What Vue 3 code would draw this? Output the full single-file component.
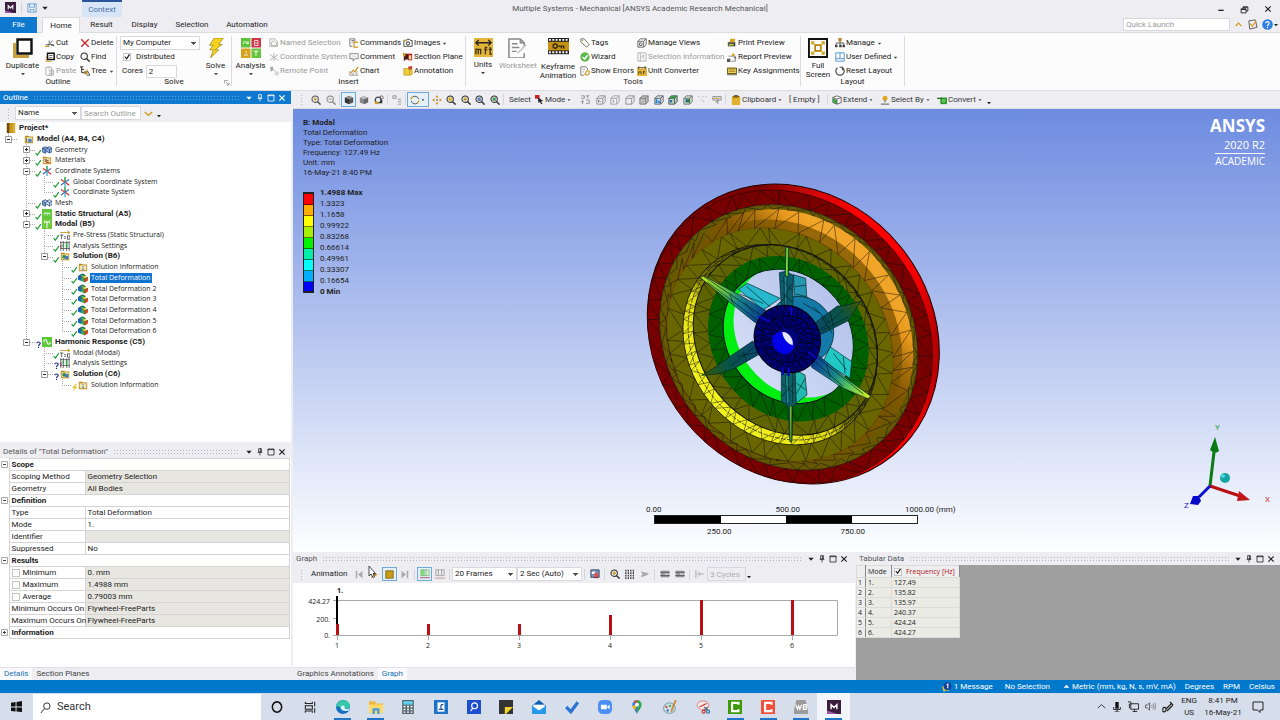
<script setup>
import { h } from 'vue'

const P = (d, c = '#444', w = 1) => `<path d="${d}" fill="none" stroke="${c}" stroke-width="${w}"/>`
const F = (d, c = '#444') => `<path d="${d}" fill="${c}"/>`
const cube = (a, b, c) => F('M1 3L6 1L11 3L6 5Z', a) + F('M1 3L6 5V11L1 9Z', b) + F('M11 3L6 5V11L11 9Z', c)
const cubeLine = (c, f = 'none', g = '') =>
  `<path d="M1 4L4 1H11V8L8 11H1Z" fill="${f}" stroke="${c}"/>` + P('M1 4H8V11M8 4L11 1', c) + g
const lens = (c, inner) =>
  `<circle cx="5" cy="5" r="3.8" fill="none" stroke="${c}" stroke-width="1.3"/>` + P('M8 8L11.5 11.5', c, 1.8) + inner
const folder = (g) => F('M1 2H5L6 3H11V11H1Z', '#b88a1e') + F('M2 4H10V10H2Z', '#f4e6b0') + g

const icons = {
  app: F('M0 0H12V12H0Z', '#3b1d40') + F('M0 9L9 12H0Z', '#9b5aa5') + P('M3.500 8V4L6 6.500L8.500 4V8', '#fff', 1.2),
  save: P('M1 1H11V11H1ZM3 1V5H9V1M3.500 11V8H8.500V11', '#5b9bd5'),
  caret: F('M3 4.500H9L6 8Z', '#444'),
  caretW: F('M2 4H10L6 8.500Z', '#fff'),
  caretB: F('M2 4H10L6 8.500Z', '#222'),
  pinW: P('M4 1H8V6H4ZM2.500 6.500H9.500M6 7V11', '#fff', 1.2), pinB: P('M4 1H8V6H4ZM2.500 6.500H9.500M6 7V11M7 1V6', '#222', 1.2),
  maxW: P('M1.500 1.500H10.500V10.500H1.500ZM1 2.500H11', '#fff', 1.2), maxB: P('M1.500 1.500H10.500V10.500H1.500ZM1 2.500H11', '#222', 1.2),
  xW: P('M2 2L10 10M10 2L2 10', '#fff', 1.8), xB: P('M2 2L10 10M10 2L2 10', '#222', 1.8),
  min: P('M2 8H10', '#222', 2), restore: P('M1.500 5H8V10.500H1.500ZM4 5V2.500H10.500V8H8M1.500 6H8M4 3H10', '#222', 1.2),
  up: P('M2 8L6 4L10 8', '#d49b1e', 1.6), down: P('M1 4L6 8.500L11 4', '#d49b1e', 1.8),
  note: P('M2 2L9 1L11 9L3 11Z', '#555') + P('M3.500 5L6 8L10 2', '#d49b1e', 1.3),
  help: '<circle cx="6" cy="6" r="5.800" fill="#2f7fe0"/>' + P('M4.200 4.600C4.200 2.400 7.800 2.400 7.800 4.600C7.800 6 6 6 6 7.500M6 8.500V10', '#fff', 1.3),
  duplicate: F('M0 5H3V17H16V20H0Z', '#c9a13c') + `<path d="M4.500 1.500H18.500V15.500H4.500Z" fill="#fff" stroke="#111" stroke-width="2.400"/>`,
  cut: P('M1 8H9M3 10L9 3M5 3V7', '#555') + P('M0 10H5', '#c9951e', 1.4) + P('M7 8L11 9', '#555', 1.6),
  del: P('M1.500 1.500L10.500 10.500M10.500 1.500L1.500 10.500', '#c8252c', 1.6),
  copy: P('M3 1.500H11V9H3Z', '#111', 1.8) + F('M5 3.500H9V4.500H5ZM5 6H8V7H5Z', '#333') + F('M1 5H2V11H8V12H1Z', '#c9951e'),
  find: lens('#333', ''), paste: P('M1 2H8V11H1ZM4 5H10V11H4M3 1H6M5 7H9M5 9H9', '#aaa'),
  tree: P('M2 1V8H6M2 4H5M0 1H4', '#333', 1.2) + F('M5 6H8V4H9V10H5Z', '#b8862a') + P('M9 6L12 11M8 11H12', '#333'),
  bolt: F('M9 0H19L14 7H18L10 13H14L5 22L8 13H4L8 8H4Z', '#f6d21c') + P('M9 0H19L14 7H18L10 13H14L5 22L8 13H4L8 8H4Z', '#98811d', .8),
  launch: P('M1 7V1H8M4 4L10 10M10 5V10H5', '#555'),
  analysis: F('M0 0H9.500V9.500H0Z', '#5fc23a') + F('M10.500 0H20V9.500H10.500Z', '#d0354a') + F('M0 10.500H9.500V20H0Z', '#d7a11d') + F('M10.500 10.500H20V20H10.500Z', '#66c53b') + P('M2 4H8M2 5.500H3M5 5.500H8M3 17H7M5 13V15M15 12V18M12.500 13L15 14L17.500 13', '#e9f7df') + P('M13.500 2.500H17V7.500H13.500ZM13.500 5H17', '#f6c9cf'),
  named: P('M1 1H7L10 4V10H1ZM3 5L6 3L9 6V9H3Z', '#aaa'), coordg: P('M6 1V11M1 3L11 10M11 3L1 10', '#aaa'), remote: F('M1 1H5V5L2 7Z', '#aaa') + P('M5 4L8 7', '#aaa') + '<circle cx="9.500" cy="9" r="1.800" fill="none" stroke="#aaa"/>',
  cmd: P('M1 1H7V5M1 1V10H4M3 3H6M3 5H5', '#666') + P('M11 5H6V11H11', '#c9951e', 1.4), comment: P('M1 2H11V8H7L5 11V8H1Z', '#777') + P('M3 5H9', '#bbb', .8),
  chart: P('M1 11H11M1 11V6', '#888') + P('M2 9L5 5L7 7L11 1', '#c9951e', 1.4) + F('M4 8H6V11H4ZM8 6H10V11H8Z', '#bbb'),
  images: P('M1 3H4L5 1.500H8L9 3H11V10H1Z', '#555', 1.2) + '<circle cx="6" cy="6.500" r="2" fill="none" stroke="#333" stroke-width="1.200"/>' + F('M1 2H4V4H1Z', '#c9951e'),
  section: F('M1 2H6V9H3L1 11Z', '#4a1c14') + F('M6 2H11V10H6Z', '#b01c1c') + F('M7 4H10V9H7Z', '#f2dc9a') + F('M0 1H3V5H0Z', '#d7a11d'),
  annot: F('M1 3H8L11 5V10L8 11H1Z', '#eecf3b') + F('M6 1L11 0V4L7 5Z', '#c33') + P('M1 3H8V11H1ZM8 3L11 5V10L8 11', '#b49620', .8),
  units: F('M0 0H20V20H0Z', '#e3b53b') + P('M2 5H18M5 2L2 5L5 8M15 2L18 5L15 8', '#222', 1.4) + P('M2 17V11M2 12H4.500V17M4.500 12H7V17M12 17V10H14M11 12.500H14M17 9.500V17H19M15.500 12H19', '#3f3110', 1.4),
  worksheet: P('M13 1H1V21H17V16M13 1L17 5V9M13 1V5H17', '#888', 1.600) + P('M4 6H10M4 10H12M4 14H9', '#888', 1.4) + P('M10 16L19 7', '#c5c5c5', 1.6),
  keyframe: F('M0 0H22V17H0Z', '#222') + `<path d="M1 2H21M1 15H21" stroke="#fff" stroke-width="2" stroke-dasharray="2 1.500"/>` + F('M0 4H22V13H0Z', '#c69214') + '<circle cx="7.500" cy="8.500" r="2.200" fill="none" stroke="#3b2b00" stroke-width="1.500"/>' + P('M10 8.500H17M14 8.500V11M16.500 8.500V11', '#3b2b00', 1.500),
  tag: P('M1 1H5L11 8L8 11L1 5Z', '#777', 1.2) + F('M2 2H4V4H2Z', '#d0b060'), wizard: '<circle cx="6" cy="6" r="5.600" fill="#58b947"/>' + P('M3 6L5.500 8.500L9.500 3.500', '#fff', 1.8),
  errors: P('M1 1H7L9 3V5M1 1V11H5', '#666') + P('M3 4H6M3 7H5', '#999') + P('M6 10L8 6H11V9L9 11Z', '#c9951e', 1.3),
  views: P('M1 4L4 1H11V8L8 11H1ZM1 4H8V11M8 4L11 1M3 6H6V9H3Z', '#555'), selinfo: P('M1 1H11V11H1ZM4 1V11M6 4H9M6 6H9', '#aaa') + P('M5 5L9 10', '#bbb'),
  conv: F('M0 3H12V12H0Z', '#e3b53b') + P('M1 2H11M3 0L1 2L3 4M9 0L11 2L9 4M2 10V7H5V10M8 10V6M7 7H10', '#4f3f10'),
  print: F('M1 5H10V10H1Z', '#444') + F('M4 1H10L9 5H3Z', '#d7a11d') + F('M2 7H8V9H2Z', '#b5c53b'), report: P('M2 5H10V11H5', '#777') + F('M0 8H4V12H0Z', '#555') + F('M6 2H9V5H6Z', '#d7a11d') + P('M8 7H11', '#555'),
  keys: F('M0 2H12V9H0Z', '#f4d35e') + P('M.5 2.500H11.500V9H.5ZM0 10.500H12', '#4f3f10') + P('M2 4.500H10M2 6.500H10', '#8a6a10', .8),
  full: `<path d="M1 1H20V20H1Z" fill="#fff" stroke="#111" stroke-width="2"/>` + P('M7.500 7.500H13.500V13.500H7.500Z', '#b8860b', 1.8) + P('M4 4L7.500 7.500M17 4L13.500 7.500M4 17L7.500 13.500M17 17L13.500 13.500M4 7V4H7M14 4H17V7M4 14V17H7M14 17H17V14', '#d7a11d', 1.4),
  manage: F('M4 0H8V4H4Z', '#b8862a') + F('M0 8H3V11H0ZM5 8H8V11H5ZM9 8H12V11H9Z', '#444') + P('M6 4V8M1.500 8V6H10.500V8', '#444'),
  userdef: P('M1 1H11V11H1ZM1 8H11M6 1V8', '#5b9bd5', 1.2), reset: P('M3 2A5 5 0 1 0 9 2M9 5V1.500H5.500', '#444', 1.4),
  zin: lens('#555', P('M3 5H7M5 3V7', '#c9951e', 1.3)), zout: lens('#888', P('M3 5H7', '#888')),
  shaded: cube('#888', '#333', '#555'), solid: cube('#bbb', '#888', '#666'), wheelview: '<circle cx="5" cy="6" r="3.500" fill="none" stroke="#444" stroke-width="1.600"/><circle cx="9" cy="3" r="2" fill="none" stroke="#555"/>' + F('M1 8H5V11H1Z', '#d7a11d') + F('M8 6H10V10H7Z', '#333'),
  listg: P('M1 1H5V4H1ZM7 5H11M7 8H11M7 11H11', '#888'), rotate: P('M3 2.500A4.800 4.800 0 0 1 10.500 5M9 9.800A4.800 4.800 0 0 1 1.500 7', '#555', 1.2) + P('M1 5L3 2.500M11 7L9 9.800', '#d7a11d', 1.8),
  pan: F('M6 0L8 3H4ZM6 12L8 9H4ZM0 6L3 4V8ZM12 6L9 4V8Z', '#c9951e') + F('M5 5H7V7H5Z', '#666'), z1: lens('#333', F('M3 3H7V7H3Z', '#e0b12c')), z2: lens('#333', P('M3 5H7M5 3V7', '#c9951e', 1.8)), z3: lens('#333', F('M3 3H7V7H3Z', '#5b80b5')), z4: lens('#333', F('M3 3H7V7H3Z', '#4b9b58')),
  mode: F('M0 0H6V5H0Z', '#d02020') + F('M4 3L11 8L8 8.500L10 12L8 12L6.500 9L4.500 10.500Z', '#222'),
  pts: P('M0 1H4V4H0M6 1H10M8 1V4M2 6V11M6 6H10V10H6M0 8H3', '#888'), c1: cubeLine('#888', 'none', P('M3 6L6 9M3 9V6', '#777')), c2: cubeLine('#999', 'none', P('M4 6V9', '#777')), c3: cubeLine('#888'), c4: cubeLine('#777', '#bbb'),
  c5: cubeLine('#555', '#d4e3f1', F('M2 5H4V10H2ZM5 7H7V10H5Z', '#1977c9')), c6: cubeLine('#444', '#b9d7c0', F('M4 1H11L8 4H1Z', '#3c9a4f') + F('M2 6H5V9H2Z', '#246fb5')), c7: cubeLine('#666', '#cde3d2', F('M3 5H8V9H3Z', '#207a3c') + F('M4 6H6V8H4Z', '#2e68c0')),
  dots: P('M1 2H3M6 2H8M10 2H12M4 6H6M8 6V9', '#bbb'), flag: P('M1 2H11V6H1ZM7 6V11M4 9L8 6', '#777') + P('M2 4H9', '#c9951e'),
  clip: F('M1 2H11V12H1Z', '#e0b12c') + F('M4 0H8V3H4Z', '#555') + F('M2 1H10V3H2Z', '#8a6510'), extend: '<path d="M6 1L11 3V9L6 11L1 9V3Z" fill="#fff" stroke="#555"/>' + F('M1 4L6 6V11L1 9Z', '#3aa845') + P('M1 3L6 5L11 3M6 5V11', '#555'), selby: '<circle cx="6" cy="4" r="3" fill="#e0a820"/>' + P('M6 6V9M1 11H11', '#777', 1.4), convert: F('M4 3H12V11H4Z', '#2d9b32') + F('M6 5H10V9H6Z', '#65c552') + P('M0 4H6', '#205f22', 1.4),
  project: F('M1 0H11V12H1Z', '#c99a18') + F('M1 0H4V12H1Z', '#6d4a10') + F('M9 1H10V11H9Z', '#f0d070'), model: folder('<circle cx="7" cy="8" r="2.500" fill="#5d88b5"/>' + P('M3 5V10', '#555')), geom: F('M0 4L4 2L7 4V8L4 10L0 8Z', '#7d9fd4') + F('M5 4L9 2L12 4V8L9 10L5 8Z', '#9db7e0') + P('M0 4L4 2L7 4L4 5.500ZM4 5.500V10L0 8V4M5 7L9 9.500L12 8V4L9 2L6 3.500M9 9.500V5.500L12 4M9 5.500L6 4', '#26467e', .9), mesh: F('M0 4L4 2L7 4V8L4 10L0 8Z', '#a9c0e4') + F('M5 4L9 2L12 4V8L9 10L5 8Z', '#d3e0f3') + P('M0 4L4 2L7 4L4 5.500ZM4 5.500V10L0 8V4M5 7L9 9.500L12 8V4L9 2L6 3.500M9 9.500V5.500L12 4M9 5.500L6 4M0 6L4 8', '#2b4878', .9),
  mat: folder(P('M4 8L8 6M5 9L9 9', '#b23b1e', 1.4) + F('M3 5H6V7H3Z', '#777')), coord: P('M6 5V0', '#22a94a', 1.8) + P('M6 6L1 3M6 6L11 10', '#d33', 1.6) + P('M6 6L1 10M6 6L11 3', '#456dbc', 1.5) + P('M6 6V12', '#29a5b8', 1.4),
  ss: F('M0 0H12V12H0Z', '#62c63a') + P('M2 5H10M3 7H4M6 7H7M9 7H10', '#fff', 1.2), modal: F('M0 0H12V12H0Z', '#70cb3c') + P('M6 2V11M3 3L6 4.500L9 3M3 2V5M9 2V5', '#fff', 1.1), harm: F('M0 0H12V12H0Z', '#5bc83a') + P('M2 6C3 2 5 2 6 6S9 10 10 6', '#fff', 1.3),
  pre: P('M0 3H12M9 1L12 3L9 5', '#c99a30', 1.1) + P('M0 6H4M2 6V11M5 8H7M5 10H7M9 7H12V11H9Z', '#444'), aset: P('M1 0V12M4 0V12M8 0V12M11 0V12M0 2H12M0 9H12', '#555') + P('M4 4V7M8 3V8', '#2da84a', 2) + P('M1 5V8', '#a04080', 1.8), sol: folder(F('M3 5H7V9H3Z', '#2c8c4a') + F('M6 6H10V10H6Z', '#477db8')), info: folder(P('M6 5V6M6 7V10', '#3668b0', 1.2)),
  defo: F('M0 4L5 1L9 3L5 10L0 8Z', '#1e62c0') + F('M3 3L7 1L9 3L5 5Z', '#3eb04a') + F('M4 5L8 3.500L12 5L8 7Z', '#e8d020') + F('M4 5L8 7V11.500L4 9.500Z', '#3eb04a') + F('M8 7L12 5V9L8 11.500Z', '#e04820') + P('M4 5L8 7L12 5M8 7V11M0 4L5 1L9 3', '#234', .7),
  check: P('M1 7L4 10.500L10 2', '#1f9a35', 2), quest: P('M3 4C3 1 9 1 9 4C9 6 6 6 6 8.500M6 10V12', '#1d2f83', 2), flash: F('M8 0L2 7H6L3 12L11 5H7L10 0Z', '#f0c020'),
  prev: F('M1 1H3V11H1ZM10 1V11L4 6Z', '#aaa'), play: F('M2 2L10 6L2 11Z', '#b8862a'), stop: F('M1 1H11V11H1Z', '#c99a18') + P('M1 1H11V11H1Z', '#7b5f12', 1), next: F('M9 1H11V11H9ZM2 1V11L8 6Z', '#aaa'),
  gcols: F('M1 1H5V8H1Z', '#8be27e') + F('M7 1H11V8H7Z', '#d4efcf') + P('M1 1H11V8H1ZM5 1V8M7 1V8', '#5aa65a', .7) + P('M0 10.500H12', '#a44'), gcols2: P('M1 1H11V8H1ZM4 1V8M8 1V8', '#999') + P('M0 11H12', '#b88'),
  export: F('M1 1H11V10H1Z', '#7292b8') + F('M2 3H6V6H2Z', '#fff') + F('M5 5H10V11H5Z', '#d55') + P('M1 1H11V10H1Z', '#345'), gridg: `<path d="M1 1V12M4 1V12M7 1V12M10 1V12" stroke="#333" stroke-width="1.500" stroke-dasharray="2 1"/>`, disc: F('M1 3L11 5L7 8L1 10L3 6Z', '#aaa'), film: F('M1 2H11V10H1Z', '#999') + P('M0 4H12M0 8H12', '#555') + P('M6 6H10', '#fff'), cyc: P('M1 1V11M1 6H11M4 3L7 6L4 9', '#aaa'),
  msg: F('M0 5H8V11L5 10L2 12Z', '#e8c93c') + '<circle cx="6.500" cy="5" r="4.600" fill="#173f9c"/>' + P('M5.500 3.500L7 2.500V7.500', '#fff', 1.3), tri: F('M1 8L6 3L11 8Z', '#fff'),
  win: F('M0 2L5 1V6H0ZM6 1L12 0V6H6ZM0 7H5V11.500L0 11ZM6 7H12V12L6 11.500Z', '#111'), search: '<circle cx="7.500" cy="4.500" r="3.500" fill="none" stroke="#222"/>' + P('M5 7L1 12', '#222'),
  cortana: '<ellipse cx="6" cy="6" rx="4" ry="4.400" fill="none" stroke="#111" stroke-width="1.300"/>', tasks: P('M2 1.500V3H8V1.500M2 5H8V8H2ZM2 11V9.500H8V11M10 1.500V5.500M10 7V11', '#222', .9),
  edge: '<circle cx="6" cy="6" r="6" fill="#1670c0"/>' + F('M0 6C0 -1 11 -2 12 5C12 8 8 8 7.500 7C8 5 4 4 4 7C2 5 1 5 0 6Z', '#36c8a8') + F('M4 7C4 4 8 4 7.500 7C8 8 11 8.500 12 6L11 9C7 10 5 9 4 7Z', '#dff2fa'),
  explorer: F('M0 1H5L6 3H12V11H0Z', '#f0b93a') + F('M0 4H12V11H0Z', '#ffd96a') + F('M3 7H9V12H3Z', '#4a9bdc') + F('M5 9H7V12H5Z', '#ffd96a'), calc: F('M1 0H11V12H1Z', '#56646f') + F('M2 1H10V4H2Z', '#5fd1ea') + `<path d="M3 5V11M6 5V11M9 5V11" stroke="#fff" stroke-width="1.600" stroke-dasharray="1.400 1"/>`,
  book: F('M0 0H12V12H0Z', '#1e73c8') + F('M3 2H9V10H3Z', '#fff') + P('M6 4V8M6 4H8M4 8H8', '#1e4f9a'), magapp: F('M0 0H12V12H0Z', '#1b4fd0') + '<circle cx="6.500" cy="5" r="2.500" fill="none" stroke="#fff"/>' + P('M5 7L3 9.500', '#fff'), sticky: F('M0 0H12V12H0Z', '#333') + F('M5 6H12L6 12H5Z', '#f2d22c'),
  mail: F('M0 5L6 0L12 5V12H0Z', '#0a5fb0') + F('M1 4H11V9H1Z', '#fff') + F('M0 5L6 9L12 5V12H0Z', '#2699e8'), todo: P('M1 6L5 10L11 2', '#2e74d4', 2.800), zoom: '<rect width="12" height="12" rx="4" fill="#4b8ff5"/>' + F('M2.500 4H7.500V8H2.500ZM8 5.500L10 4V8L8 6.500Z', '#fff'),
  maps: F('M6 12C5 9 2 7 2 4C2 2 4 0 6 0Z', '#3b78e7') + F('M6 12C7 9 10 7 10 4C10 1.500 8 0 6 0Z', '#34a853') + F('M2 5L6 4L4 9Z', '#fbbc04') + F('M3 1L6 0V4Z', '#ea4335') + '<circle cx="6" cy="4" r="1.600" fill="#fff"/>',
  paint: '<ellipse cx="5.500" cy="7" rx="5" ry="4.500" fill="#cfe0ea" stroke="#8aa"/><circle cx="3" cy="6" r="1" fill="#d44"/><circle cx="6" cy="5" r="1" fill="#4a4"/><circle cx="4" cy="9" r="1" fill="#36c"/>' + P('M7 10L11 0', '#c98b3c', 1.6), snip: '<ellipse cx="6" cy="4.500" rx="5" ry="3.800" fill="#f4e8ea" stroke="#d99"/>' + P('M3 6L9 3', '#c33') + P('M7 6L10 9M10 6L7 9', '#567', 1) + '<circle cx="6.500" cy="10" r="1.300" fill="none" stroke="#c33"/><circle cx="10.300" cy="10" r="1.300" fill="none" stroke="#37a"/>',
  camg: F('M0 0H12V12H0Z', '#3f9b0b') + P('M9 4V2.500H3.500V9.500H9V8', '#fff', 1.8), camr: F('M0 0H12V12H0Z', '#f0503c') + P('M9 4V2.500H3.500V9.500H9V8', '#fff', 1.8), wb: F('M2 0H10L12 9V12H0V9Z', '#9a9a9a') + P('M1.500 4L3 8L4 5L5 8L6.500 4M8 4V8H10.500V4H8M8 6H10.500', '#fff'),
  chev: P('M1 8L6 3.500L11 8', '#222', 1.1), mic: F('M4 0H8V8H4Z', '#111') + P('M2 6V9H10V6M6 9V12M3 12H9', '#111'), net: P('M3 3H11.500V9H3ZM7 9V11M5 11.500H10M0 1H3V4M1.500 3V8', '#222'), spk: P('M.5 4.500H2.500L5 2V10L2.500 7.500H.5Z', '#444', .9) + P('M7 4.500C8 5.500 8 6.500 7 7.500M8.500 3C10 5 10 7 8.500 9M10.300 2C12 5 12 7 10.300 10', '#777', .9), pen: P('M1 9C0 5 5 6 4 9C3 12 0 11 1 9M4 8L10 2M5 10L11 4M8 1L11 4', '#222', 1.2), action: P('M1 1H11V9H8V11.500L5.500 9H1Z', '#222')
}
const Ico = (p) => h('svg', { class: 'ico', width: p.s || 10, height: p.s || 10, viewBox: `0 0 ${p.v || 12} ${p.v || 12}`, innerHTML: icons[p.n], 'aria-hidden': 'true' })
Ico.props = ['n', 's', 'v']

const outlineCols = [
  { w: 35, items: [['cut', 'Cut'], ['copy', 'Copy'], ['paste', 'Paste', 0, 1]] },
  { w: 36, items: [['del', 'Delete'], ['find', 'Find'], ['tree', 'Tree', 1]] }
]
const insertCols = [
  { w: 80, items: [['named', 'Named Selection', 0, 1], ['coordg', 'Coordinate System', 0, 1], ['remote', 'Remote Point', 0, 1]] },
  { w: 54, items: [['cmd', 'Commands'], ['comment', 'Comment'], ['chart', 'Chart']] },
  { w: 62, items: [['images', 'Images', 1], ['section', 'Section Plane'], ['annot', 'Annotation']] }
]
const toolCols = [
  { w: 57, items: [['tag', 'Tags'], ['wizard', 'Wizard'], ['errors', 'Show Errors']] },
  { w: 90, items: [['views', 'Manage Views'], ['selinfo', 'Selection Information', 0, 1], ['conv', 'Unit Converter']] },
  { w: 73, items: [['print', 'Print Preview'], ['report', 'Report Preview'], ['keys', 'Key Assignments']] }
]
const layoutCols = [{ w: 69, items: [['manage', 'Manage', 1], ['userdef', 'User Defined', 1], ['reset', 'Reset Layout']] }]

const tools = [
  { n: 'zin', w: 15 }, { n: 'zout', w: 15 }, { sep: 1 }, { n: 'shaded', w: 15, on: 1 }, { n: 'solid', w: 15 }, { n: 'wheelview', w: 15 }, { sep: 1 },
  { n: 'listg', w: 15 }, { sep: 1 }, { n: 'rotate', w: 22, on: 1, more: 1 }, { n: 'pan', w: 15 }, { n: 'z1', w: 14 }, { n: 'z2', w: 15 }, { n: 'z3', w: 14 }, { n: 'z4', w: 15 }, { sep: 1 }
]
const filters = ['pts', 'c1', 'c2', 'c3', 'c4', 'c5', 'c6', 'c7', 'dots', 'flag']

const T = (l, icon, name, mark, exp, bold, sel) => ({ l, icon, name, mark, exp, bold, sel })
const tree = [
  T(0, 'project', 'Project*', '', '', 1), T(1, 'model', 'Model (A4, B4, C4)', '', '-', 1),
  T(2, 'geom', 'Geometry', 'check', '+'), T(2, 'mat', 'Materials', 'check', '+'), T(2, 'coord', 'Coordinate Systems', 'check', '-'),
  T(3, 'coord', 'Global Coordinate System', 'check'), T(3, 'coord', 'Coordinate System', 'check'), T(2, 'mesh', 'Mesh', 'check'),
  T(2, 'ss', 'Static Structural (A5)', 'check', '+', 1), T(2, 'modal', 'Modal (B5)', 'check', '-', 1),
  T(3, 'pre', 'Pre-Stress (Static Structural)', 'check'), T(3, 'aset', 'Analysis Settings', 'check'), T(3, 'sol', 'Solution (B6)', 'check', '-', 1),
  T(4, 'info', 'Solution Information', 'check'), T(4, 'defo', 'Total Deformation', 'check', '', 0, 1),
  ...[2, 3, 4, 5, 6].map(i => T(4, 'defo', 'Total Deformation ' + i, 'check')),
  T(2, 'harm', 'Harmonic Response (C5)', 'quest', '-', 1), T(3, 'pre', 'Modal (Modal)', 'check'), T(3, 'aset', 'Analysis Settings', 'quest'),
  T(3, 'sol', 'Solution (C6)', 'quest', '-', 1), T(4, 'info', 'Solution Information', 'flash')
]
const pitch = 267 / tree.length
const treeLines = []
tree.forEach((r, i) => {
  if (!r.l) return
  const x = 8 + (r.l - 1) * 18
  const y = Math.round((i + 0.5) * pitch)
  treeLines.push(`M${x} ${y}.5H${x + 10}`)
  let j = i + 1
  while (j < tree.length && tree[j].l > r.l) j++
  if (j < tree.length && tree[j].l === r.l) treeLines.push(`M${x + 0.5} ${y}V${Math.round((j + 0.5) * pitch)}`)
  if (tree[i - 1].l < r.l) treeLines.push(`M${x + 0.5} ${y - 6}V${y}`)
})

const details = [
  { g: 'Scope', e: '-' }, { k: 'Scoping Method', v: 'Geometry Selection', ro: 1 }, { k: 'Geometry', v: 'All Bodies', ro: 1 },
  { g: 'Definition', e: '-' }, { k: 'Type', v: 'Total Deformation' }, { k: 'Mode', v: '1.' }, { k: 'Identifier', v: '', ro: 1 }, { k: 'Suppressed', v: 'No' },
  { g: 'Results', e: '-' }, { k: 'Minimum', v: '0. mm', ro: 1, c: 1 }, { k: 'Maximum', v: '1.4988 mm', ro: 1, c: 1 }, { k: 'Average', v: '0.79003 mm', ro: 1, c: 1 },
  { k: 'Minimum Occurs On', v: 'Flywheel-FreeParts', ro: 1 }, { k: 'Maximum Occurs On', v: 'Flywheel-FreeParts', ro: 1 }, { g: 'Information', e: '+' }
]

const legendColors = ['#ff0000', '#ffae00', '#ffff00', '#a8f000', '#00f400', '#00eeaa', '#00ffff', '#00b0ff', '#0000ff']
const legendValues = ['1.4988 Max', '1.3323', '1.1658', '0.99922', '0.83268', '0.66614', '0.49961', '0.33307', '0.16654', '0 Min']
const freq = ['127.49', '135.82', '135.97', '240.37', '424.24', '424.27']
const bars = freq.map((f, i) => ({ x: 44 + i * 91, hgt: Math.round(f / 424.27 * 35) }))

// Triangulated surface mesh of the flywheel: concentric rings [cx, cy, a, b]
const tilt = 51 * Math.PI / 180
const rings = [
  [480, 500, 462, 404], [476, 502, 418, 366], [478, 500, 402, 350], [450, 524, 370, 318],
  [450, 524, 318, 272], [466, 510, 302, 258], [475, 506, 262, 226], [474, 500, 212, 182]
]
const at = ([cx, cy, a, b], t) => {
  const x = a * Math.cos(t), y = b * Math.sin(t)
  return `${(cx + x * Math.cos(tilt) - y * Math.sin(tilt)).toFixed(1)} ${(cy + x * Math.sin(tilt) + y * Math.cos(tilt)).toFixed(1)}`
}
const noise = (a, b) => { const v = Math.sin(a * 127.1 + b * 311.7) * 43758.5; return v - Math.floor(v) - 0.5 }
let meshPath = ''
const zig = (o, q, n, s) => {
  let d = 'M'
  for (let k = 0; k < n; k++) {
    const t0 = (k + noise(s, k) * 0.7) / n * 2 * Math.PI
    const t1 = (k + 0.5 + noise(s + 9, k) * 0.7) / n * 2 * Math.PI
    d += (k ? 'L' : '') + at(o, t0) + 'L' + at(q, t1)
  }
  return d + 'Z'
}
const counts = [44, 44, 38, 36, 60, 34, 30]
counts.forEach((n, i) => { meshPath += zig(rings[i], rings[i + 1], n, i) })
const mid = (a, b, f) => a.map((v, i) => v + (b[i] - v) * f)
const bandEdge = mid(rings[2], rings[3], 0.55)
const wallEdge = mid(rings[4], rings[5], 0.5)
let hubPath = ''
for (const [a, b, n] of [[102, 76, 30], [76, 52, 26], [52, 34, 20]]) hubPath += zig([472, 507, a, a * 0.93], [472, 507, b, b * 0.93], n, a)

const apps = [
  ['cortana', 'Cortana'], ['tasks', 'Task View'], ['edge', 'Edge', 1], ['explorer', 'File Explorer', 1], ['calc', 'Calculator'], ['book', 'Dictionary'], ['magapp', 'Magnifier'], ['sticky', 'Sticky Notes'], ['mail', 'Mail'],
  ['todo', 'To Do'], ['zoom', 'Zoom'], ['maps', 'Maps'], ['paint', 'Paint'], ['snip', 'Snipping Tool'], ['camg', 'Camtasia', 1], ['camr', 'Recorder', 1], ['wb', 'Workbench', 1], ['app', 'Mechanical', 1, 1]
]
</script>

<template>
  <div class="window">
    <header class="titlebar">
      <div class="quick">
        <Ico n="app" s="11" /><i class="vline"></i><button class="flat" aria-label="Save"><Ico n="save" s="10" /></button>
        <button class="flat" aria-label="Customize"><Ico n="caretB" s="8" /></button><span class="context">Context</span>
      </div>
      <div class="title">Multiple Systems - Mechanical [ANSYS Academic Research Mechanical]</div>
      <div class="winctl">
        <button aria-label="Minimize"><Ico n="min" s="8" /></button><button aria-label="Restore"><Ico n="restore" s="9" /></button><button aria-label="Close"><Ico n="xB" s="8" /></button>
      </div>
    </header>
    <nav class="tabs">
      <button class="file">File</button><button class="home">Home</button><button>Result</button><button>Display</button><button class="wide">Selection</button><button class="wide">Automation</button>
      <div class="launch"><input placeholder="Quick Launch" aria-label="Quick Launch" /><Ico n="up" s="9" /><Ico n="note" s="11" /><Ico n="help" s="11" /><Ico n="caretB" s="6" /></div>
    </nav>

    <section class="ribbon">
      <div class="group">
        <div class="gbody">
          <button class="big dup"><Ico n="duplicate" s="20" v="20" /><span>Duplicate</span><Ico n="caret" s="8" /></button>
          <div v-for="(c, i) in outlineCols" :key="i" class="gcol" :style="{ width: c.w + 'px' }">
            <button v-for="b in c.items" :key="b[1]" :class="{ off: b[3] }"><Ico :n="b[0]" s="10" />{{ b[1] }}<Ico v-if="b[2]" n="caret" s="7" /></button>
          </div>
        </div>
        <div class="glabel">Outline</div>
      </div>
      <div class="group">
        <div class="gbody">
          <div class="solve">
            <select aria-label="Solve target"><option>My Computer</option></select>
            <label><input type="checkbox" checked /> Distributed</label>
            <label>Cores <input class="cores" value="2" /></label>
          </div>
          <button class="big solvebtn"><Ico n="bolt" s="20" v="22" /><span>Solve</span><Ico n="caret" s="8" /></button>
        </div>
        <div class="glabel">Solve</div>
        <Ico class="corner" n="launch" s="6" />
      </div>
      <div class="group">
        <div class="gbody">
          <button class="big ana"><Ico n="analysis" s="20" v="20" /><span>Analysis</span><Ico n="caret" s="8" /></button>
          <div v-for="(c, i) in insertCols" :key="i" class="gcol" :style="{ width: c.w + 'px' }">
            <button v-for="b in c.items" :key="b[1]" :class="{ off: b[3] }"><Ico :n="b[0]" s="10" />{{ b[1] }}<Ico v-if="b[2]" n="caret" s="7" /></button>
          </div>
        </div>
        <div class="glabel">Insert</div>
      </div>
      <div class="group">
        <div class="gbody">
          <button class="big unit"><Ico n="units" s="19" v="20" /><span>Units</span><Ico n="caret" s="8" /></button>
          <button class="big work off"><Ico n="worksheet" s="20" v="21" /><span>Worksheet</span></button>
          <button class="big key"><Ico n="keyframe" s="21" v="22" /><span>Keyframe<br />Animation</span></button>
          <div v-for="(c, i) in toolCols" :key="i" class="gcol" :style="{ width: c.w + 'px' }">
            <button v-for="b in c.items" :key="b[1]" :class="{ off: b[3] }"><Ico :n="b[0]" s="10" />{{ b[1] }}<Ico v-if="b[2]" n="caret" s="7" /></button>
          </div>
        </div>
        <div class="glabel">Tools</div>
      </div>
      <div class="group">
        <div class="gbody">
          <button class="big unit"><Ico n="full" s="20" v="21" /><span>Full<br />Screen</span></button>
          <div v-for="(c, i) in layoutCols" :key="i" class="gcol" :style="{ width: c.w + 'px' }">
            <button v-for="b in c.items" :key="b[1]" :class="{ off: b[3] }"><Ico :n="b[0]" s="10" />{{ b[1] }}<Ico v-if="b[2]" n="caret" s="7" /></button>
          </div>
        </div>
        <div class="glabel">Layout</div>
      </div>
    </section>

    <main class="work-area">
      <aside class="left">
        <div class="phead blue"><span>Outline</span><i class="dots"></i><Ico n="caretW" s="8" /><Ico n="pinW" s="8" /><Ico n="maxW" s="8" /><Ico n="xW" s="8" /></div>
        <div class="filter"><i class="grip"></i><select aria-label="Filter by"><option>Name</option></select><input placeholder="Search Outline" aria-label="Search Outline" /><Ico n="down" s="9" /><Ico class="low" n="caretB" s="6" /></div>
        <div class="treebox">
          <div class="tree">
            <svg class="tlines" width="90" height="267" viewBox="0 0 90 267"><path :d="treeLines.join('')" /></svg>
            <div v-for="(r, i) in tree" :key="i" class="trow" :class="'l' + r.l">
              <button v-if="r.exp" class="exp" :aria-label="(r.exp === '+' ? 'Expand ' : 'Collapse ') + r.name"><svg width="7" height="7" viewBox="0 0 7 7"><path d="M.5.5H6.500V6.500H.5Z" fill="#fff" stroke="#999" /><path :d="r.exp === '+' ? 'M2 3.500H5M3.500 2V5' : 'M2 3.500H5'" stroke="#222" /></svg></button>
              <Ico v-if="r.mark" class="mark" :n="r.mark" s="7" />
              <Ico :n="r.icon" s="10" /><span :class="{ b: r.bold, sel: r.sel }">{{ r.name }}</span>
            </div>
          </div>
        </div>
        <div class="phead gray det"><span>Details of "Total Deformation"</span><i class="dots"></i><Ico n="caretB" s="8" /><Ico n="pinB" s="8" /><Ico n="maxB" s="8" /><Ico n="xB" s="8" /></div>
        <div class="detbox">
          <table class="details">
            <colgroup><col class="c-gut" /><col class="c-key" /><col /></colgroup>
            <tbody>
              <tr v-for="(d, i) in details" :key="i">
                <td class="gut"><svg v-if="d.e" width="7" height="7" viewBox="0 0 7 7"><path d="M.5.5H6.500V6.500H.5Z" fill="#fff" stroke="#aaa" /><path :d="d.e === '+' ? 'M2 3.500H5M3.500 2V5' : 'M2 3.500H5'" stroke="#444" /></svg></td>
                <th v-if="d.g" colspan="2">{{ d.g }}</th>
                <template v-else>
                  <td><label v-if="d.c"><input type="checkbox" />{{ d.k }}</label><template v-else>{{ d.k }}</template></td>
                  <td :class="{ ro: d.ro }">{{ d.v }}</td>
                </template>
              </tr>
            </tbody>
          </table>
        </div>
        <div class="ptabs"><button class="cur">Details</button><button>Section Planes</button></div>
      </aside>

      <div class="right">
        <div class="toolbar">
          <i class="grip"></i>
          <template v-for="(t, i) in tools" :key="i"><i v-if="t.sep" class="sep"></i><button v-else :class="{ on: t.on }" :style="{ width: t.w + 'px' }" :aria-label="t.n"><Ico :n="t.n" s="10" /><Ico v-if="t.more" n="caret" s="6" /></button></template>
          <span class="seltext">Select</span>
          <button class="tb mode"><Ico n="mode" s="9" />Mode<Ico n="caret" s="6" /></button>
          <button v-for="f in filters" :key="f" class="flt" :aria-label="f"><Ico :n="f" s="10" /></button><i class="sep"></i>
          <button class="tb clipb"><Ico n="clip" s="10" />Clipboard<Ico n="caret" s="6" /></button>
          <span class="empty">[ Empty ]</span><i class="sep"></i>
          <button class="tb ext"><Ico n="extend" s="10" />Extend<Ico n="caret" s="6" /></button>
          <button class="tb sby"><Ico n="selby" s="10" />Select By<Ico n="caret" s="6" /></button>
          <button class="tb cvt"><Ico n="convert" s="10" />Convert<Ico n="caret" s="6" /></button>
          <Ico class="low" n="caretB" s="6" />
        </div>

        <section class="viewport">
          <div class="caption"><b>B: Modal</b><br />Total Deformation<br />Type: Total Deformation<br />Frequency: 127.49 Hz<br />Unit: mm<br />16-May-21 8:40 PM</div>
          <div class="legend">
            <div class="swatches"><i v-for="c in legendColors" :key="c" :style="{ background: c }"></i></div>
            <div class="values"><span v-for="v in legendValues" :key="v">{{ v }}</span></div>
          </div>
          <div class="brand"><b>ANSYS</b><span>2020 R2</span><small>ACADEMIC</small></div>
          <svg class="wheel" width="330" height="330" viewBox="0 0 990 990" role="img" aria-label="Flywheel total deformation">
            <defs>
              <linearGradient id="rim" x1="0" y1="0" x2="990" y2="0" gradientUnits="userSpaceOnUse" gradientTransform="rotate(-51 490 492)"><stop offset=".4" stop-color="#7d0000" /><stop offset=".55" stop-color="#d00808" /><stop offset=".7" stop-color="#ff0000" /><stop offset=".88" stop-color="#f00000" /><stop offset=".94" stop-color="#a80000" /></linearGradient>
              <linearGradient id="bevel" x1="300" y1="690" x2="690" y2="300" gradientUnits="userSpaceOnUse" gradientTransform="rotate(-51 478 500)"><stop offset=".5" stop-color="#6b5800" /><stop offset=".68" stop-color="#845602" /><stop offset=".8" stop-color="#a8700c" /><stop offset=".92" stop-color="#e8981c" /><stop offset="1" stop-color="#f0a528" /></linearGradient>
              <linearGradient id="groove" x1="250" y1="720" x2="620" y2="350" gradientUnits="userSpaceOnUse" gradientTransform="rotate(-51 450 524)"><stop offset="0" stop-color="#f6f620" /><stop offset=".38" stop-color="#e0dc10" /><stop offset=".5" stop-color="#6c6a00" /></linearGradient>
              <linearGradient id="sky" x1="0" y1="300" x2="0" y2="700" gradientUnits="userSpaceOnUse"><stop stop-color="#b2c1ec" /><stop offset="1" stop-color="#d6dff6" /></linearGradient>
              <linearGradient id="s1" x1="215" y1="320" x2="400" y2="445" gradientUnits="userSpaceOnUse"><stop stop-color="#c8e820" /><stop offset=".4" stop-color="#58b850" /><stop offset=".6" stop-color="#18808c" /><stop offset="1" stop-color="#0a3c90" /></linearGradient>
              <linearGradient id="s2" x1="720" y1="680" x2="545" y2="560" gradientUnits="userSpaceOnUse"><stop stop-color="#d8f020" /><stop offset=".35" stop-color="#50c060" /><stop offset=".6" stop-color="#18808c" /><stop offset="1" stop-color="#0a3498" /></linearGradient>
              <linearGradient id="s3" x1="690" y1="395" x2="550" y2="485" gradientUnits="userSpaceOnUse"><stop stop-color="#3b5800" /><stop offset=".4" stop-color="#0a5444" /><stop offset="1" stop-color="#0a4668" /></linearGradient>
              <linearGradient id="s4" x1="215" y1="615" x2="390" y2="530" gradientUnits="userSpaceOnUse"><stop stop-color="#3b5800" /><stop offset=".4" stop-color="#0a5444" /><stop offset="1" stop-color="#0a4674" /></linearGradient>
              <clipPath id="bore"><ellipse cx="474" cy="500" rx="212" ry="182" transform="rotate(51 474 500)" /></clipPath>
            </defs>
            <ellipse cx="490" cy="492" rx="471" ry="415" transform="rotate(51 490 492)" fill="url(#rim)" stroke="#200" stroke-width="3" />
            <ellipse cx="480" cy="500" rx="462" ry="404" transform="rotate(51 480 500)" fill="#780000" stroke="#300" stroke-width="2" />
            <ellipse cx="476" cy="502" rx="418" ry="366" transform="rotate(51 476 502)" fill="#655800" stroke="#222" stroke-width="2" />
            <ellipse cx="478" cy="500" rx="402" ry="350" transform="rotate(51 478 500)" fill="url(#bevel)" />
            <ellipse :cx="bandEdge[0]" :cy="bandEdge[1]" :rx="bandEdge[2]" :ry="bandEdge[3]" :transform="`rotate(51 ${bandEdge[0]} ${bandEdge[1]})`" fill="#7a5400" fill-opacity=".75" />
            <ellipse cx="450" cy="524" rx="370" ry="318" transform="rotate(51 450 524)" fill="#696600" stroke="#6a4c00" stroke-width="3" />
            <ellipse cx="450" cy="524" rx="318" ry="272" transform="rotate(51 450 524)" fill="url(#groove)" stroke="#000" stroke-width="2" />
            <ellipse cx="466" cy="510" rx="302" ry="258" transform="rotate(51 466 510)" fill="#5f6400" stroke="#111" stroke-width="3" />
            <ellipse :cx="wallEdge[0]" :cy="wallEdge[1]" :rx="wallEdge[2]" :ry="wallEdge[3]" :transform="`rotate(51 ${wallEdge[0]} ${wallEdge[1]})`" fill="none" stroke="#222" stroke-width="2" stroke-dasharray="14 4" />
            <ellipse cx="475" cy="506" rx="262" ry="226" transform="rotate(51 475 506)" fill="#006000" />
            <ellipse cx="474" cy="500" rx="212" ry="182" transform="rotate(51 474 500)" fill="#00ee10" stroke="#012" stroke-width="3" />
            <path :d="meshPath" class="mesh" />
            <g clip-path="url(#bore)"><ellipse cx="505" cy="482" rx="212" ry="182" transform="rotate(51 505 482)" fill="url(#sky)" /></g>
            <g stroke="#022" stroke-width="2">
              <path d="M490 314L527 325L530 380L560 404L495 410Z" fill="#2496b0" />
              <path d="M325 358L352 340L450 385L400 420Z" fill="#26b8cc" />
              <path d="M600 530L665 575L660 625L580 575Z" fill="#20c8c4" />
              <path d="M496 600L525 615L531 675L498 700Z" fill="#22b8b0" />
              <ellipse cx="512" cy="480" rx="104" ry="96" transform="rotate(51 512 480)" fill="#1478a8" />
              <path d="M448 308L466 304L468 232H474L476 308L490 316L488 430H455Z" fill="#0c5c6c" />
              <path d="M468 232H475L474 320H466Z" fill="#7ce838" />
              <path d="M462 318H471V425L464 418Z" fill="#1c8496" />
              <path d="M210 322L222 318L330 376L425 432L392 468L372 455L310 405Z" fill="url(#s1)" />
              <path d="M542 480L560 455L622 408L640 408L692 394L655 452L570 494Z" fill="url(#s3)" />
              <path d="M535 548L565 556L660 634L722 678L714 686L640 655L545 592Z" fill="url(#s2)" />
              <path d="M368 513L396 548L312 596L262 612L215 616L258 590L302 558Z" fill="url(#s4)" />
              <path d="M454 590L494 596L498 702L488 708L486 815H480L474 708L454 694Z" fill="#0c6068" />
              <path d="M466 615H474L478 700H470Z" fill="#1c8c94" /><path d="M478 708H486L485 815H480Z" fill="#78b828" />
              <path d="M222 320L400 440M232 336L384 452M330 372L400 400M350 350L420 410M300 374L310 400M345 398L372 430M495 350L528 345M497 372L530 380M520 400L570 430M550 410L600 460M575 440L606 490M610 550L650 600M640 560L645 610M500 640L528 660M500 670L526 625M456 330L486 360M456 370L486 395M456 395L486 340M560 490L640 420M580 480L655 440M600 425L610 470M300 590L375 530M320 560L390 545M340 545L350 575M455 640L492 670M455 680L492 640M488 600V700M555 575L640 650M560 560L700 672M590 585L600 622" fill="none" />
            </g>
            <ellipse cx="472" cy="507" rx="104" ry="96" transform="rotate(51 472 507)" fill="#00007a" stroke="#000018" stroke-width="4" />
            <path :d="hubPath" class="hubmesh" />
            <ellipse cx="472" cy="507" rx="76" ry="70" fill="none" stroke="#000030" stroke-width="4" />
            <ellipse cx="459" cy="519" rx="36" ry="30" transform="rotate(51 459 519)" fill="#0000e8" />
            <path d="M457 486C475 484 492 508 488 526C472 522 458 504 457 486Z" fill="#e4eafb" />
            <path d="M458 592V616M476 594V618M535 545L562 566M385 440L420 455M484 410V436" stroke="#0808c0" stroke-width="6" />
          </svg>
          <div class="scale">
            <div class="above"><span>0.00</span><span>500.00</span><span>1000.00 (mm)</span></div>
            <div class="rule"><i></i><i></i><i></i><i></i></div>
            <div class="below"><span>250.00</span><span>750.00</span></div>
          </div>
          <svg class="triad" width="100" height="96" viewBox="0 0 100 96" aria-label="Axis triad">
            <path d="M38 64L42 30" stroke="#0a7a14" stroke-width="3" /><path d="M43 15L47 29Q43 33 38 28Z" fill="#0a7a14" />
            <path d="M38 64L68 74" stroke="#b81010" stroke-width="3" /><path d="M67 69L78 78L65 79Z" fill="#c01818" />
            <path d="M38 64L27 75" stroke="#1010d0" stroke-width="3" /><path d="M18 82L21 74L27 74L29 79L26 83Z" fill="#0808c8" />
            <circle cx="53" cy="56" r="5" fill="#12a5a5" /><circle cx="51" cy="54" r="2" fill="#48d8d8" />
            <text x="43" y="8" fill="#22a030">Y</text><text x="93" y="80" fill="#d03030">X</text><text x="12" y="86" fill="#2020b0">Z</text>
          </svg>
        </section>

        <div class="bottom">
          <section class="graph">
            <div class="phead gray"><span>Graph</span><i class="dots"></i><Ico n="caretB" s="8" /><Ico n="pinB" s="8" /><Ico n="maxB" s="8" /><Ico n="xB" s="8" /></div>
            <div class="gbar">
              <i class="grip"></i><span class="anim">Animation</span>
              <button aria-label="Previous"><Ico n="prev" s="9" /></button><button aria-label="Play"><Ico n="play" s="9" /></button><button class="on" aria-label="Stop"><Ico n="stop" s="9" /></button><button aria-label="Next"><Ico n="next" s="9" /></button><i class="sep"></i>
              <button class="on" aria-label="Distributed frames"><Ico n="gcols" s="10" /></button><button aria-label="Result sets"><Ico n="gcols2" s="10" /></button><i class="sep"></i>
              <select aria-label="Frames"><option>20 Frames</option></select><select aria-label="Duration"><option>2 Sec (Auto)</option></select><i class="sep"></i>
              <button aria-label="Export"><Ico n="export" s="10" /></button><i class="sep"></i>
              <button aria-label="Zoom to fit"><Ico n="z2" s="10" /></button><button aria-label="Columns"><Ico n="gridg" s="10" /></button><button aria-label="Update"><Ico n="disc" s="10" /></button><i class="sep"></i>
              <button aria-label="Film"><Ico n="film" s="10" /></button><button aria-label="Film export"><Ico n="film" s="10" /></button><i class="sep"></i>
              <button aria-label="Cycles"><Ico n="cyc" s="10" /></button><input class="dis" disabled value="3 Cycles" aria-label="Cycle count" /><Ico class="low" n="caretB" s="6" />
            </div>
            <svg class="cursor" width="8" height="13" viewBox="0 0 8 13"><path d="M1 1V11L3 9L5 12.500L6.500 12L5 8.500H7.500Z" fill="#fff" stroke="#222" stroke-width=".8" /></svg>
            <svg class="plot" viewBox="0 0 562 84">
              <path d="M40 17.500H544.500V52.500H40M40 35.500H44M44.500 52V57M135.500 52V57M226.500 52V57M317.500 52V57M408.500 52V57M499.500 52V57" fill="none" stroke="#a9a9a9" />
              <path d="M44 13V52" stroke="#000" stroke-width="2" />
              <rect v-for="b in bars" :key="b.x" :x="b.x - 1" :y="52 - b.hgt" width="3" :height="b.hgt" fill="#b81014" />
              <text x="44" y="10" class="tb1">1.</text>
              <g text-anchor="end"><text x="37" y="21">424.27</text><text x="37" y="39">200.</text><text x="37" y="55">0.</text></g>
              <g text-anchor="middle"><text v-for="(b, i) in bars" :key="i" :x="b.x" y="65">{{ i + 1 }}</text></g>
            </svg>
            <div class="ptabs"><button>Graphics Annotations</button><button class="cur">Graph</button></div>
          </section>
          <section class="tabular">
            <div class="phead gray"><span>Tabular Data</span><i class="dots"></i><Ico n="caretB" s="8" /><Ico n="pinB" s="8" /><Ico n="maxB" s="8" /><Ico n="xB" s="8" /></div>
            <table>
              <thead><tr><th></th><th>Mode</th><th class="fr"><label><input type="checkbox" checked />Frequency [Hz]</label></th></tr></thead>
              <tbody><tr v-for="(f, i) in freq" :key="i"><th>{{ i + 1 }}</th><td>{{ i + 1 }}.</td><td>{{ f }}</td></tr></tbody>
            </table>
          </section>
        </div>
      </div>
    </main>

    <footer class="status">
      <span class="s1"><Ico n="msg" s="10" />1 Message</span><span class="s2">No Selection</span><span class="s3"><Ico n="tri" s="7" />Metric (mm, kg, N, s, mV, mA)</span><span class="s4">Degrees</span><span class="s5">RPM</span><span>Celsius</span>
    </footer>
    <div class="taskbar">
      <button class="start" aria-label="Start"><Ico n="win" s="11" /></button>
      <label class="find"><Ico n="search" s="11" /><input placeholder="Search" aria-label="Search" /></label>
      <div class="apps"><button v-for="a in apps" :key="a[0]" :aria-label="a[1]" :class="{ run: a[2], act: a[3] }"><Ico :n="a[0]" s="14" /></button></div>
      <div class="tray">
        <Ico n="chev" s="9" /><Ico n="mic" s="10" /><Ico n="net" s="11" /><Ico n="spk" s="11" /><Ico n="pen" s="12" />
        <span class="lang">ENG<br />US</span><span class="clock">8:41 PM<br />16-May-21</span><Ico n="action" s="12" />
      </div>
    </div>
  </div>
</template>

<style>
body { overflow: hidden; }
</style>
<style scoped>
* { box-sizing: border-box; }
.window { height: 100vh; display: flex; flex-direction: column; background: #eeeef2; font: 8px/10px Roboto, "Noto Sans", sans-serif; color: #222; overflow: hidden; }
button { font: inherit; color: inherit; background: none; border: 0; padding: 0; margin: 0; white-space: nowrap; }
input, select { font: inherit; color: inherit; border: 1px solid #d8d8de; background: #fff; margin: 0; padding: 0 2px; min-width: 0; border-radius: 0; outline: 0; }
select { appearance: none; background: #fff conic-gradient(from 315deg at 50% 100%, #555 90deg, transparent 0) no-repeat right 3px center / 5px 3px; }
input::placeholder { color: #9a9a9a; opacity: 1; }
input[type="checkbox"] { appearance: none; width: 8px; height: 8px; padding: 0; border: 1px solid #c4c4c4; flex: none; display: block; }
input[type="checkbox"]:checked::before { content: ""; display: block; width: 6px; height: 6px; background: #111; clip-path: polygon(5% 45%, 25% 40%, 42% 65%, 80% 5%, 100% 12%, 45% 95%); }
.ico { flex: none; display: block; }
.low { margin-top: 6px; }
.sep { width: 1px; height: 11px; background: #d5d5dc; margin: 0 2px; flex: none; }
.grip { width: 4px; height: 11px; flex: none; background: radial-gradient(circle, #b5b5bd 0 1px, transparent 1px) 0 0 / 3px 3px; }

.titlebar { display: grid; grid-template-columns: 1fr auto 1fr; height: 17px; flex: none; color: #555; }
.quick { display: flex; align-items: center; padding-left: 5px; padding-bottom: 3px; gap: 4px; position: relative; }
.vline { width: 1px; height: 12px; background: #d5d5dc; margin: 0 1px; }
.context { position: absolute; left: 82px; top: 0; width: 40px; height: 17px; border-top: 2px solid #2b579a; background: #d8e5f7; color: #4a6fa8; text-align: center; line-height: 15px; }
.title { line-height: 18px; }
.winctl { display: flex; justify-content: flex-end; padding-right: 8px; gap: 15px; align-items: center; }
.tabs { display: flex; height: 16px; flex: none; border-bottom: 1px solid #dcdce0; line-height: 16px; }
.tabs button { width: 43px; text-align: center; height: 16px; }
.tabs .file { width: 37px; background: #0f79cf; color: #fff; margin-right: 5px; }
.tabs .home { width: 38px; background: #fcfcfc; border: 1px solid #dcdce0; border-bottom: 0; line-height: 15px; }
.tabs .wide { width: 52px; }
.tabs .wide + .wide { width: 58px; }
.launch { margin-left: auto; display: flex; align-items: center; gap: 4px; padding-right: 1px; }
.launch input { width: 107px; height: 13px; }
.launch .ico:last-child { margin-left: -4px; }

.ribbon { display: flex; height: 58px; flex: none; background: #fcfcfc; border-bottom: 1px solid #dcdce0; padding-top: 3px; }
.group { position: relative; display: flex; flex-direction: column; border-right: 1px solid #dcdce0; margin-bottom: 4px; height: 50px; }
.gbody { display: flex; height: 42px; flex: none; }
.glabel { text-align: center; line-height: 8px; }
.corner { position: absolute; right: 1px; bottom: 0; }
.gcol { display: flex; flex-direction: column; }
.gcol button { display: flex; align-items: center; height: 14px; gap: 1px; }
.off { color: #9a9a9a; }
.big { display: flex; flex-direction: column; align-items: center; padding-top: 2px; line-height: 9px; height: 46px; }
.big span { margin-top: 3px; }
.dup { width: 45px; }
.solvebtn { width: 31px; }
.ana { width: 37px; }
.unit { width: 34px; }
.work { width: 36px; }
.key { width: 44px; }
.solve { width: 80px; margin-left: 3px; display: flex; flex-direction: column; }
.solve select { height: 14px; }
.solve label { display: flex; align-items: center; height: 14px; gap: 5px; padding-left: 3px; }
.solve label + label { gap: 3px; padding-left: 2px; }
.cores { width: 31px; height: 13px; }

.work-area { flex: 1; display: grid; grid-template-columns: 291px minmax(0, 1fr); column-gap: 2px; min-height: 0; }
.left, .right { display: flex; flex-direction: column; min-width: 0; min-height: 0; }
.phead { display: flex; align-items: center; height: 13px; flex: none; gap: 3px; padding: 0 5px 0 3px; }
.dots { flex: 1; height: 5px; margin: 0 2px; background: radial-gradient(circle, #b4b4bc 0 1px, transparent 1px) 0 0 / 3px 3px; }
.blue { background: #0f79cf; color: #fff; }
.blue .dots { background: radial-gradient(circle, #5aa4e0 0 1px, transparent 1px) 0 0 / 3px 3px; }
.gray { background: #eeeef2; color: #555; }
.filter { display: flex; align-items: center; height: 18px; flex: none; padding-left: 7px; }
.filter select { width: 66px; height: 14px; margin-left: 4px; }
.filter input { width: 60px; height: 14px; margin-right: 3px; }
.filter .low { margin-left: 3px; }
.treebox { flex: 1; background: #fff; min-height: 0; padding-top: 1px; font-size: 7px; font-family: "Open Sans", "Noto Sans", sans-serif; }
.tree { position: relative; display: grid; grid-auto-rows: 1fr; height: 267px; }
.tlines { position: absolute; left: 0; top: 0; }
.tlines path { fill: none; stroke: #aaa; stroke-dasharray: 1 1; }
.trow { display: flex; align-items: center; position: relative; min-height: 0; white-space: nowrap; }
.trow span { margin-left: 2px; line-height: 10px; padding: 0 1px; }
.trow .mark { margin-right: 0; margin-top: 5px; margin-left: -7px; }
.trow .sel { background: #1173cf; color: #fff; }
.trow .b { font-family: Roboto, "Noto Sans", sans-serif; font-size: 8px; font-weight: 700; }
.l0 { padding-left: 6px; }
.l1 { padding-left: 24px; }
.l2 { padding-left: 42px; }
.l3 { padding-left: 60px; }
.l4 { padding-left: 78px; }
.exp { position: absolute; top: 2px; height: 7px; line-height: 0; background: #fff; }
.l1 .exp { left: 5px; }
.l2 .exp { left: 23px; }
.l3 .exp { left: 41px; }
.det { margin-top: 3px; }
.detbox { height: 209px; background: #fff; flex: none; }
.details { width: 290px; border-collapse: collapse; table-layout: fixed; }
.c-gut { width: 9px; }
.c-key { width: 76px; }
.details td, .details th { height: 12px; padding: 0 2px; border: 1px solid #d4d4d4; text-align: left; line-height: 10px; white-space: nowrap; }
.details .gut { border: 0; padding: 0 1px; line-height: 0; }
.details label { display: flex; align-items: center; gap: 3px; }
.details .ro { background: #e7e6e1; }
.ptabs { display: flex; height: 13px; flex: none; line-height: 12px; color: #444; border-top: 1px solid #e0e0e5; }
.ptabs button { padding: 0 4px; }
.ptabs .cur { background: #fafafc; color: #1a74b5; }

.toolbar { display: flex; align-items: center; height: 18px; flex: none; border-bottom: 1px solid #dcdce0; color: #333; white-space: nowrap; }
.toolbar .grip { margin: 0 4px 0 7px; }
.toolbar .sep { margin: 0 1px; }
.toolbar button { display: flex; align-items: center; justify-content: center; height: 15px; flex: none; }
.toolbar .on, .gbar .on { border: 1px solid #6fa9d6; background: #e4f0fa; }
.toolbar .seltext { margin-left: 4px; width: 26px; }
.toolbar .tb { justify-content: flex-start; gap: 1px; }
.mode { width: 44px; }
.toolbar .flt { width: 15px; }
.toolbar .flt:nth-of-type(even) { width: 14px; }
.toolbar .clipb { width: 58px; margin-left: 4px; }
.empty { width: 37px; }
.toolbar .ext { width: 48px; margin-left: 3px; }
.sby { width: 57px; }
.cvt { width: 49px; }

.viewport { flex: 1; position: relative; background: linear-gradient(#6d8be0, #fdfeff); min-height: 0; overflow: hidden; }
.caption { position: absolute; left: 10px; top: 9px; line-height: 10px; }
.legend { position: absolute; left: 10px; top: 78px; display: flex; gap: 6px; }
.swatches { display: grid; grid-auto-rows: 11px; width: 11px; margin-top: 5px; height: 101px; border: 1px solid #222; border-width: 2px 1px 2px; overflow: hidden; }
.swatches i { border-bottom: 1px solid rgba(0, 0, 0, .5); }
.values { display: flex; flex-direction: column; line-height: 11px; }
.values span:first-child, .values span:last-child { font-weight: 700; }
.brand { position: absolute; right: 15px; top: 5px; color: #fff; display: flex; flex-direction: column; align-items: flex-end; font-family: "Open Sans", "Noto Sans", sans-serif; }
.brand b { font-size: 17px; line-height: 24px; }
.brand span { font-size: 11px; line-height: 13px; }
.brand small { font-size: 10px; line-height: 12px; border-top: 1px solid #fff; margin-top: 2px; padding-top: 1px; }
.wheel { position: absolute; left: 337px; top: 61px; }
.mesh { fill: none; stroke: #111; stroke-width: 2; opacity: .75; }
.hubmesh { fill: none; stroke: #000028; stroke-width: 3; }
.scale { position: absolute; left: 361px; bottom: 14px; width: 264px; }
.above, .below { display: flex; justify-content: space-between; line-height: 10px; white-space: nowrap; }
.above span { width: 26px; margin-left: -8px; }
.above span + span { margin-left: 0; }
.above span:last-child { width: 13px; }
.below { padding: 2px 53px 0; line-height: 12px; }
.rule { display: grid; grid-template-columns: repeat(4, 1fr); height: 9px; border: 1px solid #222; }
.rule i:nth-child(odd) { background: #000; }
.rule i:nth-child(even) { background: #fff; }
.triad { position: absolute; right: 8px; bottom: 34px; font-size: 8px; }

.bottom { display: grid; grid-template-columns: minmax(0, 562fr) minmax(0, 424fr); column-gap: 1px; height: 128px; flex: none; }
.graph { display: flex; flex-direction: column; position: relative; min-width: 0; }
.graph .phead { padding-right: 7px; }
.gbar { display: flex; align-items: center; height: 18px; flex: none; white-space: nowrap; }
.gbar .grip { margin: 0 7px; }
.anim { width: 41px; }
.gbar button { width: 15px; height: 14px; display: grid; place-items: center; }
.gbar select { width: 65px; height: 14px; }
.gbar .dis { width: 39px; height: 14px; background: #eeeef2; color: #aaa; opacity: 1; }
.cursor { position: absolute; left: 75px; top: 13px; }
.plot { flex: 1; background: #fff; width: 100%; min-height: 0; font: 7px "Open Sans", "Noto Sans", sans-serif; }
.plot text { fill: #222; }
.plot .tb1 { font-weight: 700; }
.tabular { background: #9f9f9f; min-width: 0; }
.tabular table { border-collapse: collapse; width: 104px; table-layout: fixed; font-size: 7px; font-family: "Open Sans", "Noto Sans", sans-serif; }
.tabular th, .tabular td { height: 10px; line-height: 9px; padding: 0 2px; font-weight: 400; text-align: left; background: #ebebe5; border: 1px solid #dcdcd6; }
.tabular th { background: #eeeef0; }
.tabular thead th { height: 12px; border-right-color: #888; }
.tabular thead th:first-child { width: 9px; }
.tabular thead th:nth-child(2) { width: 26px; }
.tabular tbody th { padding: 0 1px; border-right-color: #888; }
.tabular .fr { color: #b02020; white-space: nowrap; }
.fr label { display: flex; align-items: center; gap: 4px; }

.status { display: flex; height: 13px; flex: none; background: #0079cc; color: #fff; justify-content: flex-end; align-items: center; padding-right: 5px; white-space: nowrap; }
.status span { display: flex; align-items: center; gap: 2px; }
.status .s1 { margin-right: 12px; }
.status .s2 { margin-right: 13px; }
.status .s3, .status .s4, .status .s5 { margin-right: 9px; }
.taskbar { display: flex; height: 27px; flex: none; background: #d6deec; align-items: stretch; }
.start { width: 33px; display: grid; place-items: center; }
.find { width: 228px; background: #fff; display: flex; align-items: center; gap: 4px; padding-left: 7px; border-top: 1px solid #d6deec; }
.find input { border: 0; font-size: 11px; line-height: 16px; width: 150px; }
.find input::placeholder { color: #333; }
.apps { display: flex; flex: 0 1 589px; min-width: 0; }
.apps button { flex: 1; display: grid; place-items: center; position: relative; }
.apps .run::after { content: ""; position: absolute; left: 8px; right: 8px; bottom: 0; height: 2px; background: #1f75c8; }
.apps .act { background: #f2f5fa; }
.tray { margin-left: auto; display: flex; align-items: center; gap: 6px; padding-right: 16px; }
.tray span { font-size: 8px; line-height: 12px; text-align: center; }
.lang { margin-left: 1px; }
.clock { margin-right: 3px; width: 40px; }
</style>
